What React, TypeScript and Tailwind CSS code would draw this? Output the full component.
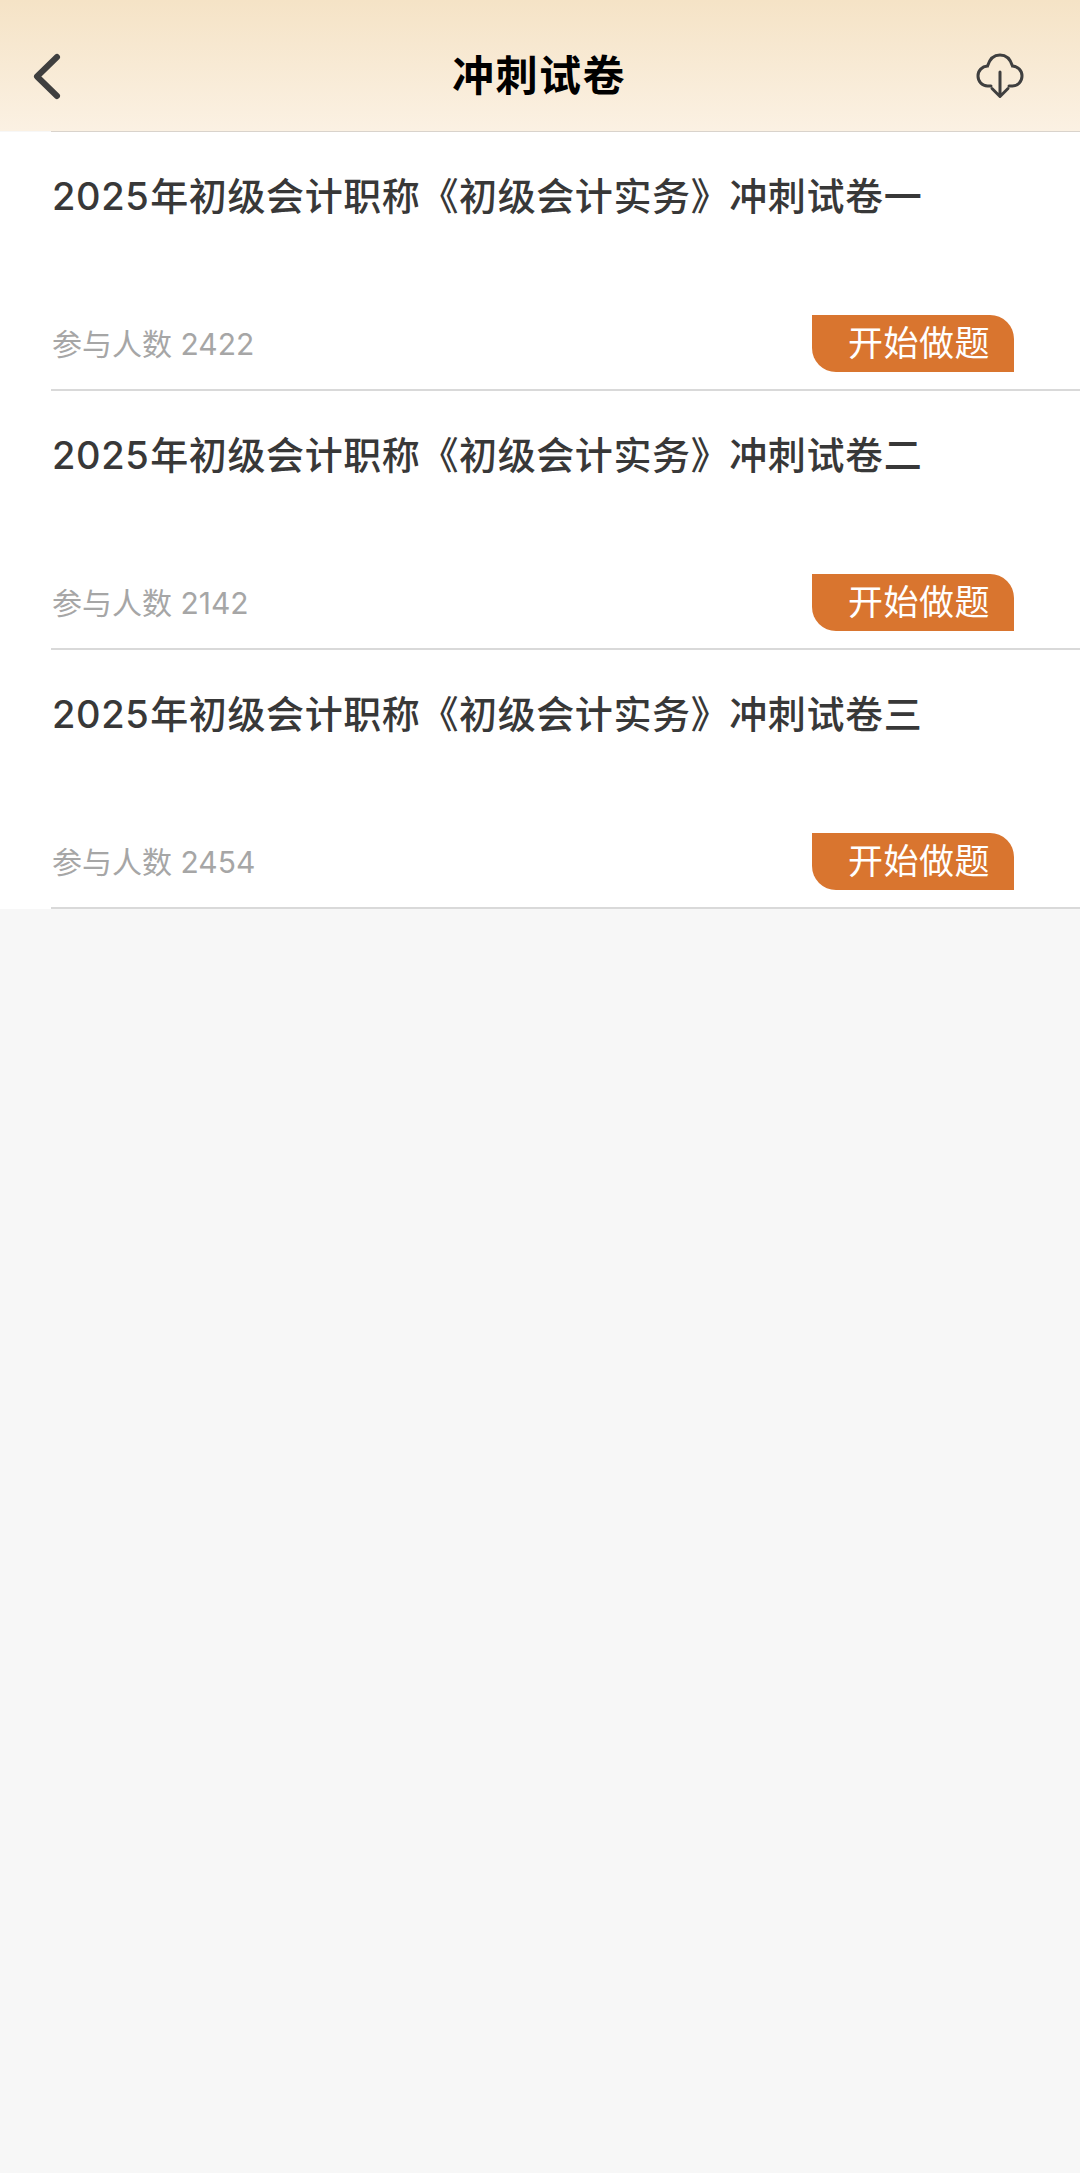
const papers = [
  { title: '年初级会计职称《初级会计实务》冲刺试卷一', count: 2422 },
  { title: '年初级会计职称《初级会计实务》冲刺试卷二', count: 2142 },
  { title: '年初级会计职称《初级会计实务》冲刺试卷三', count: 2454 },
]

const fontStack = { fontFamily: 'Inter, "Noto Sans CJK SC", sans-serif' }

function PaperRow({ title, count }: { title: string; count: number }) {
  return (
    <div className="h-[259px] pl-[51px] bg-white">
      <div className="h-full pl-px flex flex-col border-b-2 border-[#d9d9d9]">
        <h2 className="mt-[37px] h-[54px] text-[38px] leading-[54px] font-medium tracking-[0.6px] text-[#383838] whitespace-nowrap">
          <span className="mr-px">2025</span>
          {title}
        </h2>
        <div className="mt-[92px] pr-[66px] flex items-center justify-between">
          <span className="text-[30px] leading-[56px] text-[#a6a6a6]">参与人数 {count}</span>
          <button className="w-[202px] h-[57px] pl-[36px] text-left text-[35px] leading-[57px] tracking-[0.5px] text-white bg-[#d9752f] rounded-tr-[24px] rounded-bl-[24px] whitespace-nowrap">
            开始做题
          </button>
        </div>
      </div>
    </div>
  )
}

export default function App() {
  return (
    <div className="w-[1080px] h-[2173px] overflow-hidden bg-[#f7f7f7]" style={fontStack}>
      <header className="h-[131px] pl-[30px] pr-[32px] grid grid-cols-[1fr_auto_1fr] items-center bg-gradient-to-b from-[#f5e3c6] to-[#fbf1e3]">
        <svg width="34" height="50" viewBox="0 0 34 50" fill="none" className="mt-[21px]">
          <path d="M27 6 L7 25.500 L27 45" stroke="#3f3f3f" strokeWidth="6" strokeLinecap="round" strokeLinejoin="round" />
        </svg>
        <h1 className="mt-[20px] text-[42px] font-bold tracking-[1.5px] text-black">冲刺试卷</h1>
        <svg width="48" height="46" viewBox="0 0 48 46" fill="none" className="mt-[20px] mr-[24px] justify-self-end">
          <path
            d="M15 33 H11.500 C6 33 2 28.500 2 23 C2 17.500 6 13.500 11.500 13 C13.500 6.500 18 2 24 2 C30 2 34.500 6.500 36.500 13 C42 13.500 46 17.500 46 23 C46 28.500 42 33 36.500 33 H33"
            stroke="#3f3f3f"
            strokeWidth="3"
            strokeLinecap="round"
          />
          <path d="M24 19 V43 M16 35.500 L24 43.500 L32 35.500" stroke="#3f3f3f" strokeWidth="3" strokeLinecap="round" strokeLinejoin="round" />
        </svg>
      </header>
      <div>
        <div className="ml-[51px] h-px bg-[#d9d3cc]" />
        {papers.map((paper) => (
          <PaperRow key={paper.count} title={paper.title} count={paper.count} />
        ))}
      </div>
    </div>
  )
}
